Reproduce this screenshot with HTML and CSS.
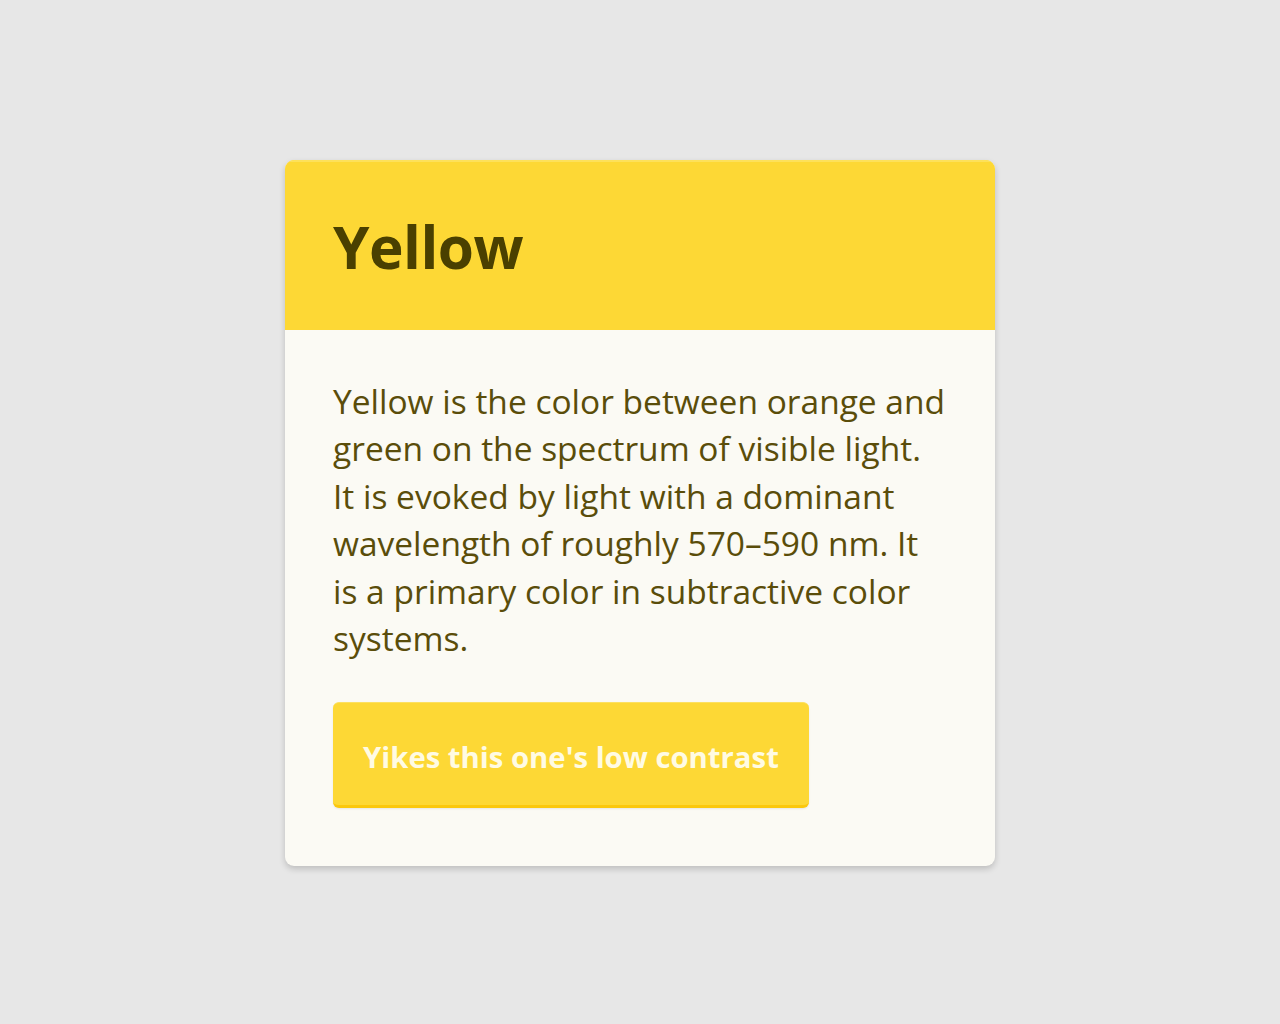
FILE: index.html
```html
<!DOCTYPE html>
<html lang="en">
<head>
<meta charset="utf-8">
<title>Yellow</title>
<link rel="stylesheet" href="styles.css">
</head>
<body>
<main class="page">
  <article class="card">
    <header class="card-header">
      <h1 class="card-title">Yellow</h1>
    </header>
    <div class="card-body">
      <p class="card-text">Yellow is the color between orange and green on the spectrum of visible light. It is evoked by light with a dominant wavelength of roughly 570–590 nm. It is a primary color in subtractive color systems.</p>
      <button class="card-button" type="button">Yikes this one's low contrast</button>
    </div>
  </article>
</main>
</body>
</html>
```

FILE: styles.css
```css
html, body {
  margin: 0;
  padding: 0;
}
body {
  background: #e7e7e7;
  font-family: "Open Sans", "Noto Sans", sans-serif;
}
.page {
  min-height: 1024px;
  display: flex;
  justify-content: center;
  align-items: flex-start;
  padding-top: 160px;
  box-sizing: border-box;
}
.card {
  width: 710px;
  background: #fbfaf4;
  border-radius: 9px;
  overflow: hidden;
  box-shadow: 0 3px 6px rgba(0,0,0,0.18);
}
.card-header {
  background: #fdd835;
  border-top: 2px solid #fde15a;
  height: 170px;
  box-sizing: border-box;
  display: flex;
  align-items: center;
  padding: 0 48px;
}
.card-title {
  margin: 0;
  font-size: 58.5px;
  font-weight: 700;
  color: #4a4000;
  letter-spacing: -0.5px;
}
.card-body {
  padding: 48px 48px 58px;
}
.card-text {
  margin: 0 0 40px;
  font-size: 33.5px;
  line-height: 47.4px;
  color: #5a4d0a;
}
.card-button {
  font-family: inherit;
  font-size: 29.3px;
  font-weight: 700;
  color: #fffbe3;
  background: #fdd835;
  border: none;
  border-top: 1px solid #fde060;
  border-bottom: 3px solid #fbc80c;
  border-radius: 6px;
  height: 106px;
  padding: 6px 30px 0;
  box-shadow: 0 1px 2px rgba(0,0,0,0.08);
  cursor: pointer;
}
```
